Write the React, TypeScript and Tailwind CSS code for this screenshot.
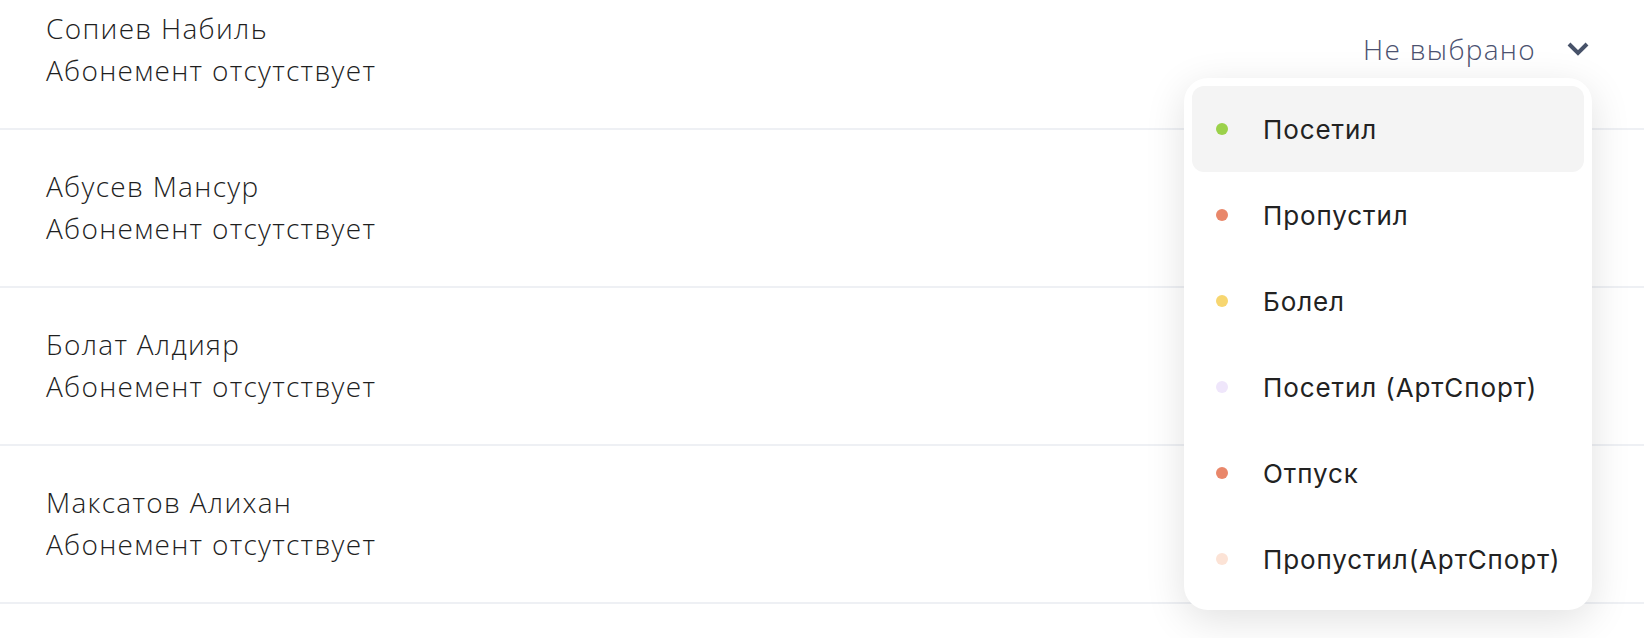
const students = [
  { name: "Сопиев Набиль", sub: "Абонемент отсутствует" },
  { name: "Абусев Мансур", sub: "Абонемент отсутствует" },
  { name: "Болат Алдияр", sub: "Абонемент отсутствует" },
  { name: "Максатов Алихан", sub: "Абонемент отсутствует" },
];

const options = [
  { label: "Посетил", dot: "bg-[#9bd14a]", active: true },
  { label: "Пропустил", dot: "bg-[#e9876a]" },
  { label: "Болел", dot: "bg-[#f7d670]" },
  { label: "Посетил (АртСпорт)", dot: "bg-[#efe6fb]" },
  { label: "Отпуск", dot: "bg-[#e9876a]" },
  { label: "Пропустил(АртСпорт)", dot: "bg-[#fce3d6]" },
];

function StatusMenu() {
  return (
    <div className="absolute right-[52px] top-[106px] z-10 w-[408px] rounded-[24px] bg-white p-2 shadow-[0_10px_40px_rgba(0,0,0,0.12)]">
      {options.map((o) => (
        <div
          key={o.label}
          className={`flex h-[86px] items-center rounded-[12px] pl-6 ${o.active ? "bg-[#f4f4f4]" : ""}`}
        >
          <span className={`h-3 w-3 rounded-full ${o.dot}`} />
          <span className="ml-[35px] font-['Inter',sans-serif] text-[26px] tracking-[0.9px] text-[#222]">
            {o.label}
          </span>
        </div>
      ))}
    </div>
  );
}

export default function App() {
  return (
    <div className="h-[638px] overflow-hidden bg-white font-['Open_Sans',sans-serif]">
      <div className="-mt-[28px]">
        {students.map((s, i) => (
          <div
            key={s.name}
            className="relative flex h-[158px] items-center justify-between border-b-2 border-[#eef0f4] pb-[2px] pl-[46px] pr-[54px]"
          >
            <div className="text-[28px] font-light leading-[42px] tracking-[1.3px] text-[#1f1f1f]">
              <div>{s.name}</div>
              <div>{s.sub}</div>
            </div>
            {i === 0 && (
              <>
                <div className="flex items-center">
                  <span className="text-[28px] font-light tracking-[1.3px] text-[#4b5270]">Не выбрано</span>
                  <svg width="24" height="16" viewBox="0 0 24 16" className="ml-[30px]">
                    <path d="M3 3l9 9 9-9" fill="none" stroke="#475269" strokeWidth="4" />
                  </svg>
                </div>
                <StatusMenu />
              </>
            )}
          </div>
        ))}
      </div>
    </div>
  );
}
